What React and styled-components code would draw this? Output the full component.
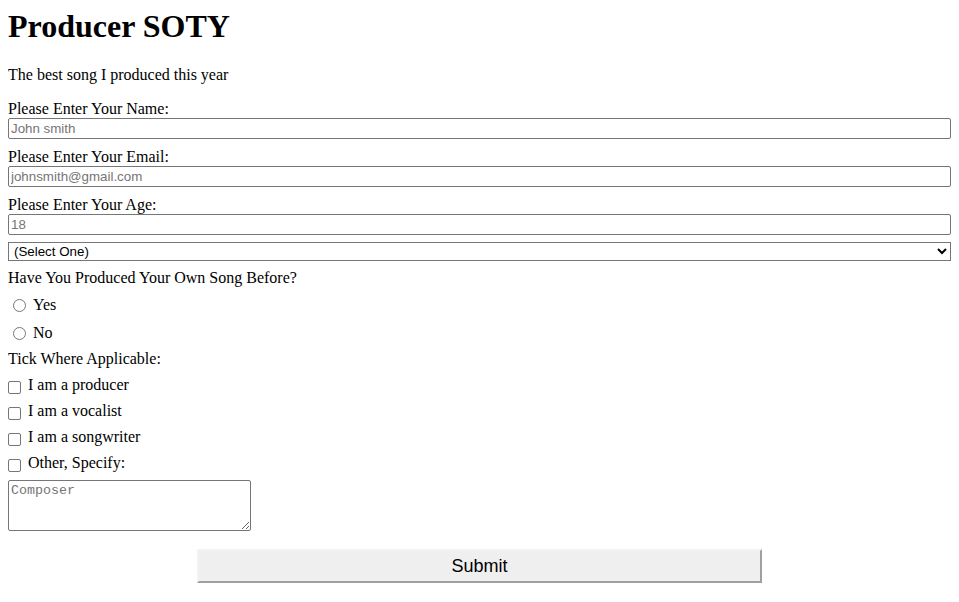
import React from 'react'
import styled, { createGlobalStyle } from 'styled-components'

const GlobalStyle = createGlobalStyle`
    body {
        margin: 8px;
        font-family: "Liberation Serif", "Times New Roman", serif;
        font-size: 16px;
        line-height: 18px;
        color: #000;
        background: #fff;
    }
`

const Title = styled.h1`
    margin: 0 0 21px;
    font-size: 32px;
    line-height: 37px;
    font-weight: 700;
`

const Intro = styled.p`
    margin: 0 0 16px;
`

const Label = styled.label`
    display: block;
    margin-top: ${(p) => p.$top || 0}px;
`

const TextInput = styled.input`
    display: block;
    box-sizing: border-box;
    width: 100%;
    height: 21px;
    margin: 0;
    padding: 1px 2px;
    border: 1px solid #767676;
    border-radius: 2px;
    font-family: "Liberation Sans", Arial, sans-serif;
    font-size: 13.33px;
    color: #000;

    &::placeholder {
        color: #757575;
    }
`

const Select = styled.select`
    display: block;
    box-sizing: border-box;
    width: 100%;
    height: 19px;
    margin: 7px 0 0;
    padding: 0 1px;
    border: 1px solid #767676;
    border-radius: 0;
    background: #fff;
    font-family: "Liberation Sans", Arial, sans-serif;
    font-size: 13.33px;
    color: #000;
`

const OptionRow = styled.label`
    display: flex;
    align-items: center;
    height: ${(p) => p.$height}px;
    margin-top: ${(p) => p.$top || 0}px;
`

const Radio = styled.input.attrs({ type: 'radio' })`
    appearance: none;
    box-sizing: border-box;
    width: 13px;
    height: 13px;
    margin: 0 7px 0 5px;
    border: 1px solid #767676;
    border-radius: 50%;
    background: #fff;
    flex-shrink: 0;
`

const Checkbox = styled.input.attrs({ type: 'checkbox' })`
    appearance: none;
    box-sizing: border-box;
    width: 13px;
    height: 13px;
    margin: 4px 7px 0 0;
    border: 1px solid #767676;
    border-radius: 2px;
    background: #fff;
    flex-shrink: 0;
`

const CheckList = styled.div`
    margin-top: 4px;
`

const Notes = styled.textarea`
    display: block;
    box-sizing: border-box;
    width: 243px;
    height: 51px;
    margin: 4px 0 0;
    padding: 2px;
    border: 1px solid #767676;
    border-radius: 2px;
    font-family: "Liberation Mono", "Courier New", monospace;
    font-size: 13.33px;

    &::placeholder {
        color: #757575;
    }
`

const SubmitButton = styled.button`
    display: block;
    box-sizing: border-box;
    width: 60%;
    height: 34px;
    margin: 18px auto 0;
    padding: 0;
    border: 2px solid;
    border-color: #f3f3f3 #a0a0a0 #a0a0a0 #f3f3f3;
    background: #efefef;
    font-family: "Liberation Sans", Arial, sans-serif;
    font-size: 18px;
    color: #000;
`

const roles = ['I am a producer', 'I am a vocalist', 'I am a songwriter', 'Other, Specify:']

export default function App() {
    return (
        <>
            <GlobalStyle />
            <Title>Producer SOTY</Title>
            <Intro>The best song I produced this year</Intro>
            <form onSubmit={(e) => e.preventDefault()}>
                <Label htmlFor="name">Please Enter Your Name:</Label>
                <TextInput id="name" type="text" placeholder="John smith" />
                <Label htmlFor="email" $top={9}>Please Enter Your Email:</Label>
                <TextInput id="email" type="email" placeholder="johnsmith@gmail.com" />
                <Label htmlFor="age" $top={9}>Please Enter Your Age:</Label>
                <TextInput id="age" type="number" placeholder="18" />
                <Select defaultValue="">
                    <option value="">(Select One)</option>
                    <option value="student">Student</option>
                    <option value="full-time">Full Time Job</option>
                    <option value="other">Other</option>
                </Select>
                <Label $top={8}>Have You Produced Your Own Song Before?</Label>
                <OptionRow $height={28} $top={4}>
                    <Radio name="produced" value="yes" />
                    Yes
                </OptionRow>
                <OptionRow $height={28}>
                    <Radio name="produced" value="no" />
                    No
                </OptionRow>
                <Label $top={3}>Tick Where Applicable:</Label>
                <CheckList>
                    {roles.map((role) => (
                        <OptionRow key={role} $height={26}>
                            <Checkbox value={role} />
                            {role}
                        </OptionRow>
                    ))}
                </CheckList>
                <Notes placeholder="Composer" />
                <SubmitButton type="submit">Submit</SubmitButton>
            </form>
        </>
    )
}
